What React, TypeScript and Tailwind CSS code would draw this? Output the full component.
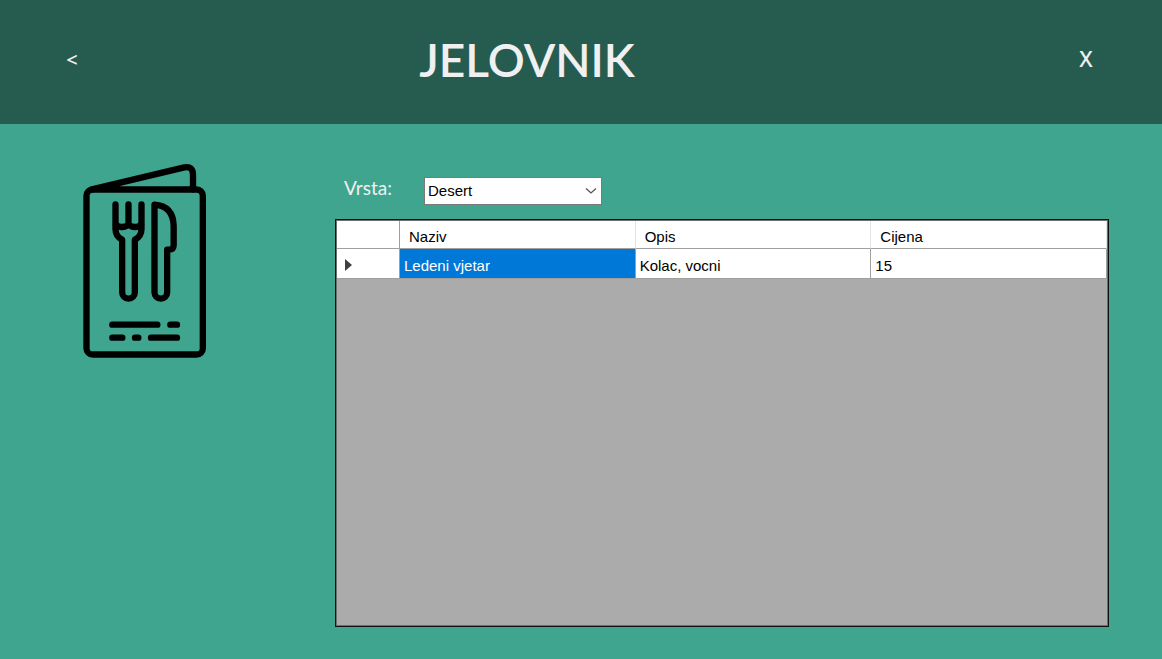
import { useState } from "react";

type Item = { naziv: string; opis: string; cijena: number };

const menu: Record<string, Item[]> = {
  Desert: [{ naziv: "Ledeni vjetar", opis: "Kolac, vocni", cijena: 15 }],
};

function MenuIcon() {
  return (
    <svg
      viewBox="39 40 369 585"
      className="h-[195px] w-[123px] shrink-0"
      fill="none"
      stroke="#000"
      strokeWidth="19"
      strokeLinecap="round"
      strokeLinejoin="round"
      aria-hidden="true"
    >
      <rect x="49.500" y="119.500" width="349" height="495" rx="19" />
      <path d="M66 119 L343 53 Q369 48 369 76 V119" />
      <path d="M66 119 L155 100 L146 119 Z" fill="#000" stroke="none" />
      <path d="M136.500 164 V238 Q136.500 260 156.500 270 V428 A19 19 0 0 0 194.500 428 V270 Q214.500 260 214.500 238 V164" />
      <path d="M175.500 164 V226 M138 224 Q144 233 156 232 Q168 232 175.500 224 Q183 232 195 232 Q207 233 213 224" />
      <path d="M253.500 165 V428 A19 19 0 0 0 291.500 428 V300 H297 Q311 300 311 286 V228 Q309 169 253.500 165 Z" />
      <path d="M127 525 H262 M301 525 H321 M127 564 H157 M195 564 H205 M243 564 H321" />
    </svg>
  );
}

export default function App() {
  const [kind, setKind] = useState("Desert");

  return (
    <div className="flex min-h-screen flex-col bg-[#3fa58e] font-['Open_Sans','Noto_Sans',sans-serif] text-[#f0f0f0]">
      <header className="flex h-[124px] items-center justify-between bg-[#265c50] pr-16 pb-1 pl-[60px]">
        <button type="button" aria-label="Natrag" className="w-6 text-xl leading-7 font-semibold">
          &lt;
        </button>
        <h1 className="pr-[104px] font-['Lato',sans-serif] text-[46px] leading-[64px] font-semibold">JELOVNIK</h1>
        <button type="button" aria-label="Zatvori" className="w-6 pb-1 font-['Noto_Sans',sans-serif] text-[22px] leading-7 font-medium">
          X
        </button>
      </header>

      <main className="flex grow gap-[129px] pt-[39px] pr-[53px] pb-8 pl-[83px]">
        <MenuIcon />
        <div className="flex min-w-0 grow flex-col pt-[13px]">
          <div className="flex items-start pl-[9px]">
            <label htmlFor="vrsta" className="w-20 font-['Lato',sans-serif] text-[19px] leading-6">
              Vrsta:
            </label>
            <div className="relative mt-px">
              <select
                id="vrsta"
                value={kind}
                onChange={(e) => setKind(e.target.value)}
                className="h-7 w-[178px] appearance-none border border-[#7a7a7a] bg-white pt-px pl-[3px] font-['Liberation_Sans',sans-serif] text-[15px] text-black"
              >
                {Object.keys(menu).map((name) => (
                  <option key={name}>{name}</option>
                ))}
              </select>
              <svg
                viewBox="0 0 12 8"
                className="pointer-events-none absolute top-[10px] right-[5px] h-2 w-3"
                fill="none"
                stroke="#555"
                strokeWidth="1.300"
                aria-hidden="true"
              >
                <path d="M1 1.500 L6 6 L11 1.500" />
              </svg>
            </div>
          </div>

          <div className="mt-[14px] grow border border-[#101010] bg-[#ababab] p-px font-['Liberation_Sans',sans-serif] text-[15px] leading-5 text-black shadow-[inset_0_0_0_1px_#6e6e6e]">
            <table className="w-full table-fixed border-separate border-spacing-0 bg-white text-left">
              <colgroup>
                <col className="w-[63px]" />
                <col />
                <col />
                <col />
              </colgroup>
              <thead>
                <tr className="h-7">
                  <td className="border-r border-b border-[#a0a0a0]" />
                  <th className="border-r border-b border-r-[#e5e5e5] border-b-[#a0a0a0] px-[9px] pt-[5px] font-normal">Naziv</th>
                  <th className="border-r border-b border-r-[#e5e5e5] border-b-[#a0a0a0] px-[9px] pt-[5px] font-normal">Opis</th>
                  <th className="border-r border-b border-r-[#e5e5e5] border-b-[#a0a0a0] px-[9px] pt-[5px] font-normal">Cijena</th>
                </tr>
              </thead>
              <tbody>
                {menu[kind].map((item) => (
                  <tr key={item.naziv} className="h-[30px]">
                    <td className="border-r border-b border-[#a0a0a0] pt-[3px] pl-2">
                      <svg viewBox="0 0 7 12" className="h-3 w-[7px]" fill="#404040" aria-hidden="true">
                        <path d="M0 0 L7 6 L0 12 Z" />
                      </svg>
                    </td>
                    <td className="border-r border-b border-[#a0a0a0] bg-[#0078d7] px-1 pt-[5px] text-white">{item.naziv}</td>
                    <td className="border-r border-b border-[#a0a0a0] px-1 pt-[5px]">{item.opis}</td>
                    <td className="border-r border-b border-[#a0a0a0] px-1 pt-[5px]">{item.cijena}</td>
                  </tr>
                ))}
              </tbody>
            </table>
          </div>
        </div>
      </main>
    </div>
  );
}
